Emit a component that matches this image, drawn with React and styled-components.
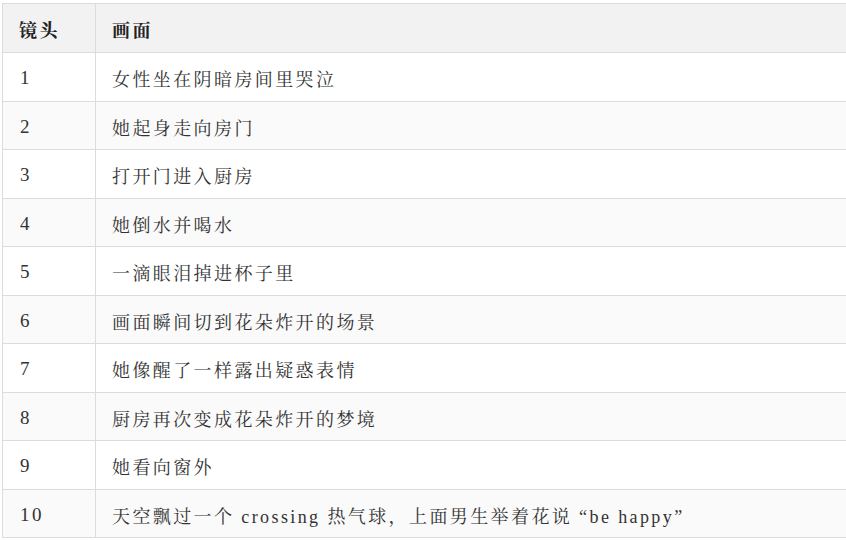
import React from 'react'
import styled, { createGlobalStyle } from 'styled-components'

const Global = createGlobalStyle`
html, body {
  margin: 0;
  padding: 0;
  background: #fff;
  overflow: hidden;
}
body {
  font-family: "Liberation Serif", "Noto Serif CJK SC", "Noto Sans CJK SC", serif;
}
`

const Wrap = styled.div`
padding: 3px 0 0 2px;
`

const Table = styled.table`
border-collapse: collapse;
width: 844px;
font-size: 18px;
letter-spacing: 2.4px;
color: #333;
`

const HeadCell = styled.th`
background-color: #f2f2f2;
border: 1px solid #dcdcdc;
border-right: ${p => (p.last ? 'none' : '1px solid #dcdcdc')};
text-align: left;
font-weight: bold;
color: #222;
padding: 2px 0 0 16px;
height: 49px;
width: ${p => p.w || 'auto'};
box-sizing: border-box;
`

const Row = styled.tr`
background-color: ${p => (p.alt ? '#fafafa' : '#fff')};
height: 48.5px;
`

const Cell = styled.td`
border: 1px solid #dcdcdc;
border-right: ${p => (p.last ? 'none' : '1px solid #dcdcdc')};
padding: 3px 0 0 16px;
vertical-align: middle;
`

const Num = styled(Cell)`
padding-left: 17px;
font-size: 19px;
`

const shots = [
  '女性坐在阴暗房间里哭泣',
  '她起身走向房门',
  '打开门进入厨房',
  '她倒水并喝水',
  '一滴眼泪掉进杯子里',
  '画面瞬间切到花朵炸开的场景',
  '她像醒了一样露出疑惑表情',
  '厨房再次变成花朵炸开的梦境',
  '她看向窗外',
  '天空飘过一个 crossing 热气球，上面男生举着花说 “be happy”',
]

export default function App() {
  return (
    <>
      <Global />
      <Wrap>
        <Table>
          <thead>
            <tr>
              <HeadCell w="93px">镜头</HeadCell>
              <HeadCell last>画面</HeadCell>
            </tr>
          </thead>
          <tbody>
            {shots.map((s, i) => (
              <Row key={i} alt={i % 2 === 1}>
                <Num>{i + 1}</Num>
                <Cell last>{s}</Cell>
              </Row>
            ))}
          </tbody>
        </Table>
      </Wrap>
    </>
  )
}
